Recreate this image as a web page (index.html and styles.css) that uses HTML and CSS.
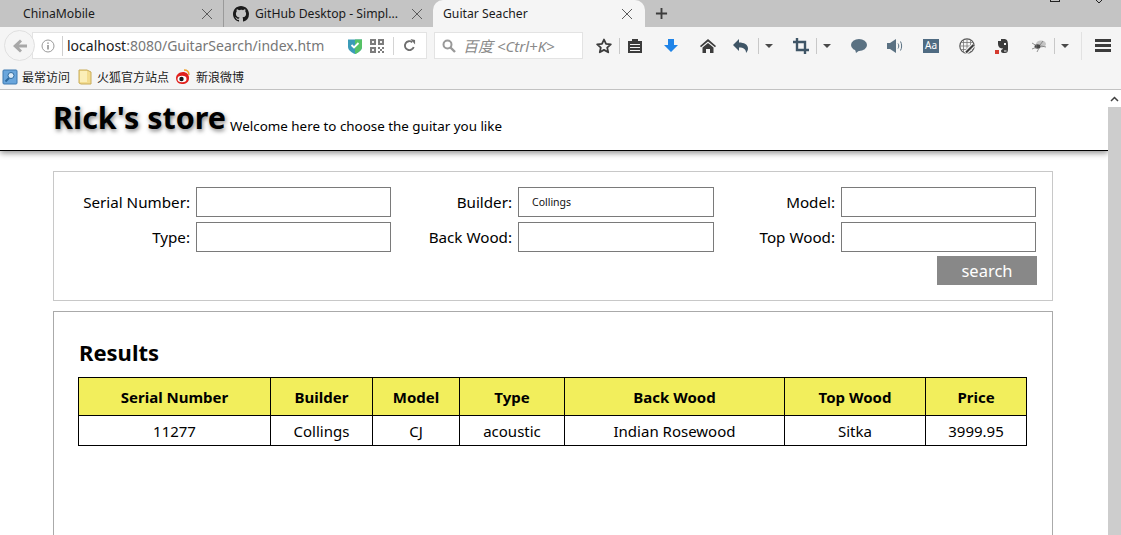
FILE: index.html
```html
<!DOCTYPE html>
<html lang="en">
<head>
  <meta charset="UTF-8" />
  <meta name="viewport" content="width=device-width, initial-scale=1.0"/>
  <title>Guitar Seacher</title>
  <link rel="stylesheet" href="styles.css">
</head>
<body>
  <div class="browser">
    <div class="tabbar">
      <div class="tab tab-first">
        <span class="tab-title">ChinaMobile</span>
        <svg class="tab-close" viewBox="0 0 12 12"><path d="M1 1l10 10M11 1L1 11"/></svg>
      </div>
      <div class="tab tab-second">
        <svg class="tab-icon" viewBox="0 0 16 16"><path fill="#1b1b1b" d="M8 0C3.58 0 0 3.58 0 8c0 3.54 2.29 6.53 5.47 7.59.4.07.55-.17.55-.38v-1.34c-2.23.48-2.69-1.07-2.69-1.07-.36-.93-.89-1.17-.89-1.17-.73-.5.05-.49.05-.49.8.06 1.23.82 1.23.82.71 1.23 1.87.87 2.33.66.07-.52.28-.87.5-1.07-1.77-.2-3.64-.89-3.64-3.95 0-.87.31-1.59.82-2.15-.08-.2-.36-1.02.08-2.12 0 0 .67-.21 2.2.82A7.6 7.6 0 0 1 8 3.87c.68 0 1.36.09 2 .27 1.53-1.04 2.2-.82 2.2-.82.44 1.1.16 1.92.08 2.12.51.56.82 1.27.82 2.15 0 3.07-1.87 3.75-3.65 3.95.29.25.54.73.54 1.48v2.2c0 .21.15.46.55.38A8 8 0 0 0 16 8c0-4.42-3.58-8-8-8z"/></svg>
        <span class="tab-title">GitHub Desktop - Simpl...</span>
        <svg class="tab-close" viewBox="0 0 12 12"><path d="M1 1l10 10M11 1L1 11"/></svg>
      </div>
      <div class="tab tab-active">
        <span class="tab-title">Guitar Seacher</span>
        <svg class="tab-close" viewBox="0 0 12 12"><path d="M1 1l10 10M11 1L1 11"/></svg>
      </div>
      <svg class="tab-new" viewBox="0 0 14 14"><path d="M7 1v12M1 7h12"/></svg>
      <span class="win-min"></span>
      <svg class="win-close" viewBox="0 0 12 4"><path d="M1 0l3 3M7 0L4 3"/></svg>
    </div>

    <div class="navbar">
      <div class="back-btn">
        <svg viewBox="0 0 16 16"><path fill="#a8a8a8" d="M8 1.5l2 2L7 6.5h8v3H7l3 3-2 2L1 8z"/></svg>
      </div>
      <div class="urlbar">
        <svg class="info" viewBox="0 0 14 14"><circle cx="7" cy="7" r="6" fill="none" stroke="#9a9a9a"/><path stroke="#8a8a8a" stroke-width="1.5" d="M7 6v4.5M7 3.4v1.4"/></svg>
        <span class="url"><span class="url-host">localhost</span>:8080/GuitarSearch/index.htm</span>
        <svg class="shield" viewBox="0 0 14 16"><path fill="#3b9bb8" d="M0 1.5h14V9c0 3-3.500 5.500-7 7-3.500-1.500-7-4-7-7z"/><path fill="#56c266" d="M7 1.500h7V9c0 3-3.500 5.500-7 7z"/><path fill="none" stroke="#fff" stroke-width="1.800" d="M3.500 7l2.500 2.500 4.500-4.500"/></svg>
        <svg class="qr" viewBox="0 0 14 14"><path fill="#7d7d7d" d="M0 0h6v6H0zM8 0h6v6H8zM0 8h6v6H0zM8 8h2v2H8zM12 8h2v2h-2zM10 10h2v2h-2zM8 12h2v2H8zM12 12h2v2h-2z"/><path fill="#f5f5f5" d="M2 2h2v2H2zM10 2h2v2h-2zM2 10h2v2H2z"/></svg>
        <span class="url-sep"></span>
        <svg class="reload" viewBox="0 0 14 14"><path fill="none" stroke="#6e6e6e" stroke-width="2" d="M11.500 8.500A4.800 4.800 0 1 1 10 3.500"/><path fill="#6e6e6e" d="M8 0l5 1v5z"/></svg>
      </div>
      <div class="searchbar">
        <svg class="search-icon" viewBox="0 0 14 14"><circle cx="5.500" cy="5.500" r="4" fill="none" stroke="#999" stroke-width="2"/><path stroke="#999" stroke-width="2.400" d="M8.500 8.500l4.500 4.500"/></svg>
        <span class="search-hint">百度 &lt;Ctrl+K&gt;</span>
      </div>

      <div class="tool tool-star">
        <svg viewBox="0 0 16 16"><path fill="none" stroke="#3c3c3c" stroke-width="1.800" stroke-linejoin="round" d="M8 1.500l2 4.400 4.800.5-3.600 3.200 1 4.700L8 11.900l-4.200 2.400 1-4.700L1.200 6.400 6 5.900z"/></svg>
      </div>
      <span class="sep sep-star"></span>
      <div class="tool tool-clip">
        <svg viewBox="0 0 16 16"><path fill="#3c3c3c" d="M1 3h4V1h6v2h4v12H1z"/><path fill="#f5f5f5" d="M3 6h10v1H3zM3 9h10v1H3zM3 12h10v1H3z"/></svg>
      </div>
      <div class="tool tool-down">
        <svg viewBox="0 0 16 16"><path fill="#1f84e8" d="M5 1h6v6h4l-7 7-7-7h4z"/></svg>
      </div>
      <div class="tool tool-home">
        <svg viewBox="0 0 16 16"><path fill="#3c3c3c" d="M8 1l8 7-1 1.200L8 3.500 1 9.200 0 8z"/><path fill="#3c3c3c" d="M8 5l5.500 4.500V15H10v-4H6v4H2.500V9.500z"/></svg>
      </div>
      <div class="tool tool-undo">
        <svg viewBox="0 0 16 16"><path fill="#3f5566" d="M6 1v3.500c5 0 9 2 9 6 0 1.800-1 3.200-2 4.500.4-3.500-2.500-5.500-7-5.500V13L0 7z"/></svg>
      </div>
      <span class="sep"></span>
      <div class="tool tool-caret"><span class="caret"></span></div>
      <div class="tool tool-crop">
        <svg viewBox="0 0 16 16"><path fill="none" stroke="#3f5566" stroke-width="2.400" d="M4 0v12h12M0 4h12v12"/></svg>
      </div>
      <span class="sep"></span>
      <div class="tool tool-caret"><span class="caret"></span></div>
      <div class="tool tool-chat">
        <svg viewBox="0 0 16 16"><ellipse cx="8" cy="7" rx="8" ry="6" fill="#5a7182"/><path fill="#5a7182" d="M4 11l1 4 4-3z"/></svg>
      </div>
      <div class="tool tool-sound">
        <svg viewBox="0 0 16 16"><path fill="#5a7182" d="M0 5h3l6-4v14l-6-4H0z"/><path fill="none" stroke="#5a7182" d="M11 5.500c1 1.500 1 3.500 0 5M13.500 3.500c1.500 2.500 1.500 6.500 0 9"/></svg>
      </div>
      <div class="tool tool-aa">
        <span class="aa-box">Aa</span>
      </div>
      <div class="tool tool-globe">
        <svg viewBox="0 0 16 16"><circle cx="8" cy="8" r="7.200" fill="none" stroke="#5a5a5a" stroke-width="1.200"/><path fill="none" stroke="#777" stroke-width=".8" d="M1 4.500h14M1 8h14M1 11.500h14M4.500 1v14M8 1v14M11.500 1v14"/><path stroke="#f5f5f5" stroke-width="4" d="M6.500 15l8-8"/><path stroke="#3c3c3c" stroke-width="2.200" d="M7 14.500l7.500-7.500"/></svg>
      </div>
      <div class="tool tool-note">
        <svg viewBox="0 0 16 16"><path fill="#3c3c3c" d="M4 3h3V1h3c3 0 4 2 4 6v4c0 3-1 4-3 4H9c-1 0-2-1-2-2 0-1 1-2 2-2v-.5C6 10.500 4 9 4 6z"/><path fill="#f5f5f5" d="M10 5h2v2h-2zM10 12.500h2.500v1H10z"/><rect x="1" y="12" width="4" height="4" fill="#d43a2f"/></svg>
      </div>
      <div class="tool tool-bug">
        <svg viewBox="0 0 16 16"><ellipse cx="10" cy="6" rx="5" ry="3.500" fill="#c4c4c4"/><ellipse cx="6.500" cy="8.500" rx="3" ry="2.200" fill="#4a4a4a"/><path stroke="#777" stroke-width=".8" d="M1 5l5 3M1 11l5-2M6 14l2-4M12 3l-3 4M15 9l-5-1"/></svg>
      </div>
      <span class="sep"></span>
      <div class="tool tool-caret"><span class="caret"></span></div>
      <span class="sep sep-tall"></span>
      <div class="tool tool-menu">
        <span class="menu-bar"></span><span class="menu-bar"></span><span class="menu-bar"></span>
      </div>
    </div>

    <div class="bookmarks">
      <div class="bookmark bm-first">
        <svg viewBox="0 0 16 16"><rect x="1" y="1" width="14" height="14" rx="1" fill="#6aa6dc" stroke="#3d79b0"/><circle cx="9" cy="6.500" r="3" fill="#dcecf9" stroke="#2e6a9f"/><path stroke="#2e6a9f" stroke-width="2" d="M7 9l-3.500 3.500"/></svg>
        <span>最常访问</span>
      </div>
      <div class="bookmark bm-second">
        <svg viewBox="0 0 16 16"><path fill="#f3dc8f" stroke="#c9ac5b" d="M2 1h8l4 2v12H4l-2-1z"/><path fill="#fbeeb8" d="M3 2h7v11H3z"/></svg>
        <span>火狐官方站点</span>
      </div>
      <div class="bookmark bm-third">
        <svg viewBox="0 0 16 16"><path fill="#e0201c" d="M2 9c0-3 3-6 7-6 3 0 6 2 6 6s-3 6-7 6-6-3-6-6z"/><ellipse cx="8" cy="10" rx="4.500" ry="3.300" fill="#fff"/><circle cx="7.500" cy="10" r="2.200" fill="#1a1a1a"/><path fill="none" stroke="#f0a028" stroke-width="1.400" d="M10 1c3 0 5 2 5 5"/></svg>
        <span>新浪微博</span>
      </div>
    </div>
  </div>

  <div class="viewport">
    <div class="page">
      <header class="store-header">
        <h1>Rick's store</h1>
        <span class="tagline">Welcome here to choose the guitar you like</span>
      </header>

      <form class="panel search-form" onsubmit="return false">
        <label class="field-label">Serial Number:</label>
        <input class="field" type="text" />
        <label class="field-label">Builder:</label>
        <input class="field field-small" type="text" value="Collings" />
        <label class="field-label">Model:</label>
        <input class="field" type="text" />
        <label class="field-label">Type:</label>
        <input class="field" type="text" />
        <label class="field-label">Back Wood:</label>
        <input class="field" type="text" />
        <label class="field-label">Top Wood:</label>
        <input class="field" type="text" />
        <button class="search-btn" type="submit">search</button>
      </form>

      <section class="panel results">
        <h2>Results</h2>
        <table class="result-table">
          <colgroup>
            <col class="col-serial"><col class="col-builder"><col class="col-model"><col class="col-type">
            <col class="col-back"><col class="col-top"><col class="col-price">
          </colgroup>
          <tr>
            <th>Serial Number</th><th>Builder</th><th>Model</th><th>Type</th><th>Back Wood</th><th>Top Wood</th><th>Price</th>
          </tr>
          <tr>
            <td>11277</td><td>Collings</td><td>CJ</td><td>acoustic</td><td>Indian Rosewood</td><td>Sitka</td><td>3999.95</td>
          </tr>
        </table>
      </section>
    </div>

    <div class="scrollbar">
      <div class="scroll-up">
        <svg viewBox="0 0 9 6"><path fill="none" stroke="#404040" stroke-width="1.500" d="M1 5l3.500-3.500L8 5"/></svg>
      </div>
      <div class="scroll-thumb"></div>
    </div>
  </div>
</body>
</html>
```

FILE: styles.css
```css
html, body {
  margin: 0;
  padding: 0;
  height: 100%;
  overflow: hidden;
}
body {
  font-family: "Noto Sans", "Noto Sans CJK SC", sans-serif;
  background-color: white;
  color: black;
  display: flex;
  flex-direction: column;
}

/* browser chrome */
.browser {
  flex: none;
  height: 89px;
  border-bottom: 1px solid #c2c2c2;
  background-color: #f5f5f5;
}
.tabbar {
  position: relative;
  display: flex;
  height: 27px;
  background-color: #c4c4c4;
}
.tab {
  display: flex;
  align-items: center;
  box-sizing: border-box;
  height: 27px;
  font-size: 12.2px;
  color: #1a1a1a;
}
.tab-first {
  width: 224px;
  padding: 0 10px 0 23px;
  border-right: 1px solid #9a9a9a;
}
.tab-second {
  width: 209px;
  padding: 0 10px 0 9px;
}
.tab-active {
  width: 212px;
  padding: 0 12px 0 10px;
  background-color: #f5f5f5;
  border-radius: 10px 10px 0 0;
}
.tab-title {
  flex: 1;
  white-space: nowrap;
  overflow: hidden;
}
.tab-icon {
  width: 16px;
  height: 16px;
  margin-right: 6px;
}
.tab-close {
  width: 12px;
  height: 12px;
  fill: none;
  stroke: #5c5c5c;
}
.tab-new {
  width: 13px;
  height: 13px;
  margin: 7px 0 0 10px;
  fill: none;
  stroke: #3c3c3c;
  stroke-width: 2;
}
.win-min {
  position: absolute;
  left: 1050px;
  top: -8px;
  width: 8px;
  height: 8px;
  border: 1px solid #222;
}
.win-close {
  position: absolute;
  left: 1095px;
  top: 0;
  width: 12px;
  height: 4px;
  fill: none;
  stroke: #222;
}

.navbar {
  display: flex;
  align-items: center;
  box-sizing: border-box;
  height: 35px;
  padding-top: 2px;
  overflow: hidden;
}
.back-btn {
  display: flex;
  align-items: center;
  justify-content: center;
  flex: none;
  z-index: 1;
  box-sizing: border-box;
  width: 31px;
  height: 31px;
  margin-left: 4px;
  border: 1px solid #e0e0e0;
  border-radius: 50%;
  background-color: #f5f5f5;
}
.back-btn svg {
  width: 16px;
  height: 16px;
}
.urlbar {
  display: flex;
  align-items: center;
  flex: none;
  box-sizing: border-box;
  width: 395px;
  height: 27px;
  margin-left: -3px;
  padding-left: 8px;
  background-color: white;
  border: 1px solid #e3e3e3;
}
.info {
  width: 14px;
  height: 14px;
  margin-right: 4px;
  padding: 3px 7px 3px 0;
  border-right: 1px solid #cfcfcf;
}
.url {
  width: 272px;
  font-size: 14px;
  color: #777;
  white-space: nowrap;
}
.url-host {
  color: #1a1a1a;
}
.shield {
  width: 14px;
  height: 16px;
  margin-left: 9px;
}
.qr {
  width: 14px;
  height: 14px;
  margin-left: 8px;
}
.url-sep {
  width: 1px;
  height: 18px;
  margin-left: 9px;
  background-color: #d4d4d4;
}
.reload {
  width: 13px;
  height: 13px;
  margin-left: 9px;
}
.searchbar {
  display: flex;
  align-items: center;
  flex: none;
  box-sizing: border-box;
  width: 149px;
  height: 27px;
  margin-left: 7px;
  padding-left: 7px;
  background-color: white;
  border: 1px solid #e3e3e3;
}
.search-icon {
  width: 14px;
  height: 14px;
}
.search-hint {
  margin-left: 7px;
  font-size: 15px;
  font-style: italic;
  color: #8a8a8a;
  white-space: nowrap;
}

.tool {
  display: flex;
  align-items: center;
  justify-content: center;
  flex: none;
  height: 20px;
}
.tool svg {
  width: 16px;
  height: 16px;
}
.sep {
  flex: none;
  width: 1px;
  height: 16px;
  background-color: #c8c8c8;
}
.sep-star { margin-left: 3px; }
.sep-tall {
  height: 28px;
  margin-left: 6px;
  background-color: #e2e2e2;
}
.tool-star { width: 24px; margin-left: 9px; }
.tool-clip { width: 30px; }
.tool-down { width: 42px; }
.tool-home { width: 32px; }
.tool-undo { width: 34px; }
.tool-caret { width: 20px; }
.tool-crop { width: 30px; margin-left: 7px; }
.tool-chat { width: 44px; }
.tool-sound { width: 28px; }
.tool-aa { width: 44px; }
.tool-globe { width: 28px; }
.tool-note { width: 42px; }
.tool-bug { width: 31px; }
.tool-menu {
  flex-direction: column;
  gap: 2px;
  width: 36px;
  margin-left: 3px;
}
.caret {
  border-top: 4px solid #4a4a4a;
  border-left: 4px solid transparent;
  border-right: 4px solid transparent;
}
.aa-box {
  box-sizing: border-box;
  width: 16px;
  height: 14px;
  background-color: #4f6b82;
  color: white;
  font-size: 10px;
  line-height: 13px;
  text-align: center;
}
.menu-bar {
  width: 16px;
  height: 3px;
  background-color: #3c3c3c;
}

.bookmarks {
  display: flex;
  align-items: center;
  box-sizing: border-box;
  height: 27px;
  padding-top: 2px;
  font-size: 12px;
  color: #1a1a1a;
}
.bookmark {
  display: flex;
  align-items: center;
  white-space: nowrap;
}
.bookmark svg {
  width: 16px;
  height: 16px;
}
.bm-first { margin-left: 2px; }
.bm-first span { margin-left: 4px; }
.bm-second { margin-left: 7px; }
.bm-second span { margin-left: 4px; }
.bm-third { margin-left: 5px; }
.bm-third span { margin-left: 6px; }

/* page */
.viewport {
  flex: 1;
  display: flex;
  min-height: 0;
}
.page {
  flex: 1;
  min-width: 0;
  overflow: hidden;
}
.store-header {
  display: flex;
  align-items: flex-end;
  box-sizing: border-box;
  height: 61px;
  padding: 6px 0 12px 53px;
  border-bottom: 1px solid black;
  box-shadow: 0 2px 6px rgba(0, 0, 0, 0.45);
}
.store-header h1 {
  margin: 0;
  font-size: 30.5px;
  line-height: 42px;
  font-weight: bold;
  text-shadow: 1px 2px 4px rgba(0, 0, 0, 0.5);
}
.tagline {
  margin: 0 0 5px 4px;
  font-size: 13.4px;
  line-height: 14px;
}
.panel {
  box-sizing: border-box;
  width: 1000px;
  margin-left: 53px;
  border: 1px solid #c8c8c8;
}
.search-form {
  display: grid;
  grid-template-columns: 142px 195px 127px 196px 127px 195px;
  grid-auto-rows: 30px;
  row-gap: 5px;
  align-items: center;
  height: 130px;
  margin-top: 20px;
  padding-top: 15px;
  font-size: 15.2px;
}
.field-label {
  padding-right: 6px;
  text-align: right;
  white-space: nowrap;
}
.field {
  box-sizing: border-box;
  width: 100%;
  height: 30px;
  margin: 0;
  padding: 0 13px;
  border: 1px solid #7a7a7a;
  border-radius: 0;
  font-family: inherit;
  color: #111;
}
.field-small {
  font-size: 10.5px;
}
.search-btn {
  grid-column: 6;
  justify-self: end;
  align-self: start;
  box-sizing: border-box;
  width: 100px;
  height: 29px;
  margin: -1px -1px 0 0;
  padding: 0;
  border: none;
  background-color: #888;
  color: white;
  font-family: inherit;
  font-size: 16.5px;
}
.results {
  height: 240px;
  margin-top: 10px;
  padding: 24px 24px 0;
  border-color: #aaa;
}
.results h2 {
  margin: 0 0 9px;
  padding-left: 1px;
  font-size: 22px;
  line-height: 32px;
  font-weight: bold;
}
.result-table {
  width: 948px;
  table-layout: fixed;
  border-collapse: collapse;
  font-size: 15px;
}
.col-serial { width: 192px; }
.col-builder { width: 102px; }
.col-model { width: 87px; }
.col-type { width: 105px; }
.col-back { width: 220px; }
.col-top { width: 141px; }
.col-price { width: 101px; }
.result-table th, .result-table td {
  padding: 0;
  border: 1px solid black;
  text-align: center;
}
.result-table th {
  height: 37px;
  background-color: #f2ee5c;
  font-weight: bold;
}
.result-table td {
  height: 29px;
}

.scrollbar {
  flex: none;
  width: 13px;
  background-color: #f0f0f0;
  display: flex;
  flex-direction: column;
}
.scroll-up {
  display: flex;
  align-items: center;
  justify-content: center;
  height: 17px;
  background-color: white;
}
.scroll-up svg {
  width: 9px;
  height: 6px;
}
.scroll-thumb {
  flex: 1;
  background-color: #cdcdcd;
}
```
